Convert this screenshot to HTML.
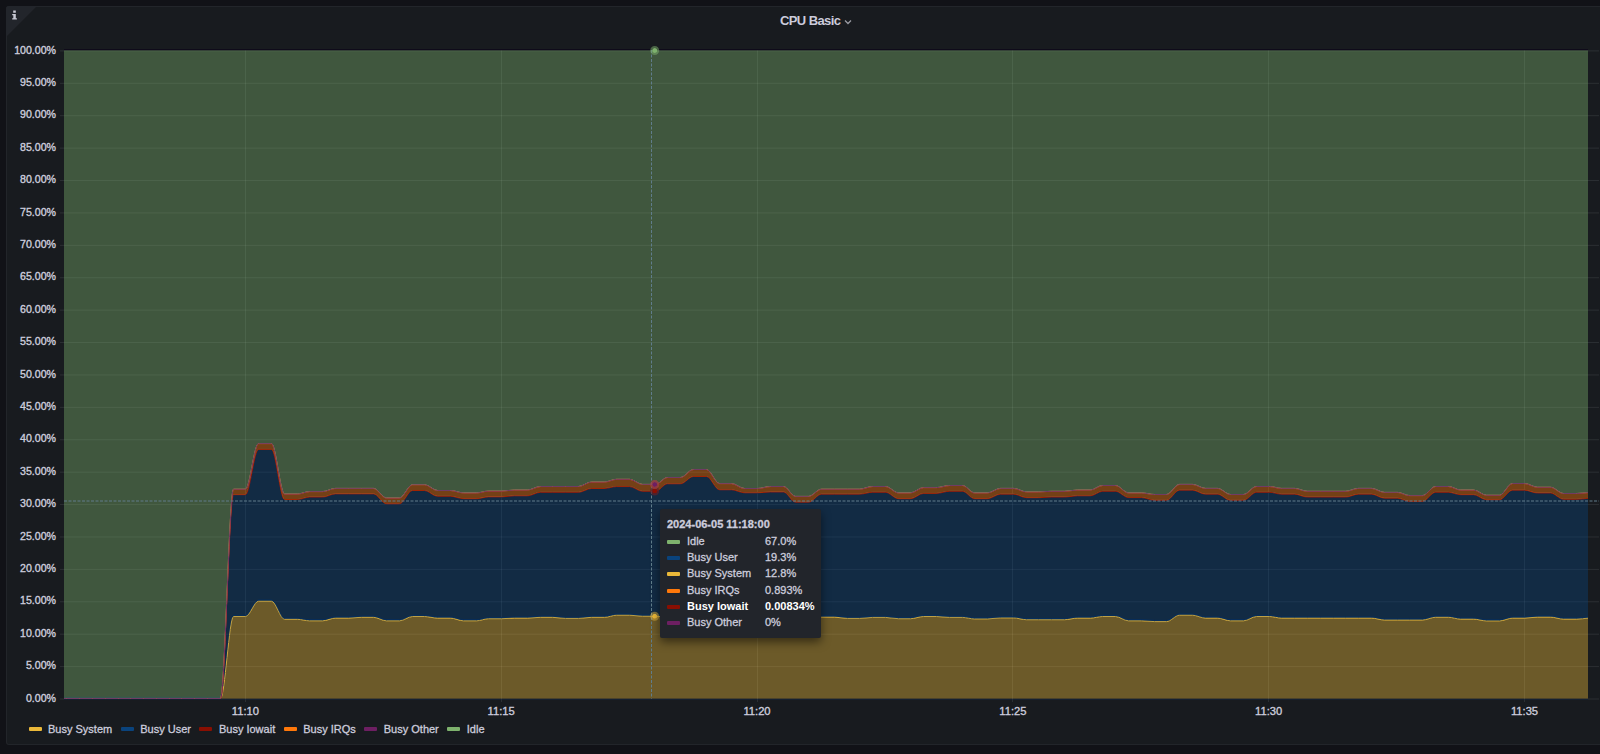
<!DOCTYPE html>
<html><head><meta charset="utf-8"><style>
html,body{margin:0;padding:0;width:1600px;height:754px;overflow:hidden;background:#111217;font-family:"Liberation Sans",sans-serif;}
.panel{position:absolute;left:6px;top:6px;width:1610px;height:739px;background:#181b1f;border:1px solid rgba(204,204,220,0.06);border-radius:3px;box-sizing:border-box;}
.corner{position:absolute;left:6px;top:6px;width:0;height:0;border-top:31px solid #22252b;border-right:31px solid transparent;border-top-left-radius:3px;}
.info{position:absolute;left:12px;top:10px;font-size:10px;font-weight:bold;color:#ccccdc;}
.title{position:absolute;left:0;top:13px;width:1600px;text-align:center;}
.title span{position:absolute;left:780px;top:0;font-size:13px;letter-spacing:-0.6px;font-weight:bold;color:#ccccdc;white-space:nowrap;}
svg{position:absolute;left:0;top:0;}
.grid line{stroke:rgba(240,250,255,0.09);stroke-width:1;}
.ln{fill:none;stroke-width:1;stroke-linejoin:round;}
.yl text{font-size:10.6px;fill:#ccccdc;text-anchor:end;stroke:#ccccdc;stroke-width:0.35px;}
.xl text{font-size:11.2px;fill:#ccccdc;text-anchor:middle;stroke:#ccccdc;stroke-width:0.35px;}
.legend{position:absolute;left:28px;top:722.5px;font-size:11px;color:#ccccdc;white-space:nowrap;-webkit-text-stroke:0.3px #ccccdc;}
.li{display:inline-block;margin-right:8px;}
.li i{display:inline-block;width:13px;height:4px;border-radius:1px;margin-right:7px;vertical-align:2px;position:relative;left:0.5px;}
.tip{position:absolute;left:660px;top:509px;width:161px;height:129px;background:#22252b;border-radius:2px;box-shadow:0 4px 10px rgba(0,0,0,0.5);box-sizing:border-box;padding:9px 7px;font-size:11px;color:#ccccdc;-webkit-text-stroke:0.3px currentColor;}
.tip .th{font-weight:bold;height:15px;}
.tr{position:relative;height:16.2px;line-height:16px;}
.tr i{position:absolute;left:0;top:7px;width:13px;height:4px;border-radius:1px;}
.tl{position:absolute;left:20px;}
.tv{position:absolute;left:98px;}
.tr.b{font-weight:bold;color:#fff;-webkit-text-stroke:0;}
</style></head><body>
<div class="panel"></div>
<div class="corner"></div>

<div class="title"><span>CPU Basic</span></div>
<svg width="1600" height="754" viewBox="0 0 1600 754">
<g class="grid"><line x1="60" x2="1599" y1="699.00" y2="699.00"/><line x1="60" x2="1599" y1="666.60" y2="666.60"/><line x1="60" x2="1599" y1="634.19" y2="634.19"/><line x1="60" x2="1599" y1="601.78" y2="601.78"/><line x1="60" x2="1599" y1="569.38" y2="569.38"/><line x1="60" x2="1599" y1="536.98" y2="536.98"/><line x1="60" x2="1599" y1="504.57" y2="504.57"/><line x1="60" x2="1599" y1="472.16" y2="472.16"/><line x1="60" x2="1599" y1="439.76" y2="439.76"/><line x1="60" x2="1599" y1="407.36" y2="407.36"/><line x1="60" x2="1599" y1="374.95" y2="374.95"/><line x1="60" x2="1599" y1="342.54" y2="342.54"/><line x1="60" x2="1599" y1="310.14" y2="310.14"/><line x1="60" x2="1599" y1="277.74" y2="277.74"/><line x1="60" x2="1599" y1="245.33" y2="245.33"/><line x1="60" x2="1599" y1="212.92" y2="212.92"/><line x1="60" x2="1599" y1="180.52" y2="180.52"/><line x1="60" x2="1599" y1="148.12" y2="148.12"/><line x1="60" x2="1599" y1="115.71" y2="115.71"/><line x1="60" x2="1599" y1="83.30" y2="83.30"/><line x1="60" x2="1599" y1="50.90" y2="50.90"/><line x1="245.50" x2="245.50" y1="50.5" y2="702"/><line x1="501.50" x2="501.50" y1="50.5" y2="702"/><line x1="757.50" x2="757.50" y1="50.5" y2="702"/><line x1="1012.50" x2="1012.50" y1="50.5" y2="702"/><line x1="1268.50" x2="1268.50" y1="50.5" y2="702"/><line x1="1524.50" x2="1524.50" y1="50.5" y2="702"/></g>
<defs><clipPath id="pc"><rect x="64" y="50" width="1524" height="649"/></clipPath></defs>
<g class="fills" clip-path="url(#pc)"><path fill="rgba(234,184,57,0.4)" d="M54.50,698.50L66.50,698.50L79.50,698.50L92.50,698.50L105.50,698.50L118.50,698.50L130.50,698.50L143.50,698.50L156.50,698.50L169.50,698.50L181.50,698.50L194.50,698.50L207.50,698.50L220.50,698.50C224.83,698.50 229.17,616.50 233.50,616.50L245.50,616.50C249.83,616.50 254.17,601.20 258.50,601.20L271.50,601.20C275.83,601.20 280.17,619.30 284.50,619.30L297.50,619.30C301.50,619.30 305.50,620.80 309.50,620.80L322.50,620.80C326.83,620.80 331.17,618.10 335.50,618.10L348.50,618.10C352.83,618.10 357.17,617.30 361.50,617.30L373.50,617.30C377.83,617.30 382.17,620.80 386.50,620.80L399.50,620.80C403.83,620.80 408.17,616.50 412.50,616.50L424.50,616.50C428.83,616.50 433.17,618.10 437.50,618.10L450.50,618.10C454.83,618.10 459.17,620.80 463.50,620.80L476.50,620.80C480.50,620.80 484.50,618.70 488.50,618.70L501.50,618.70C505.83,618.70 510.17,618.10 514.50,618.10L527.50,618.10C531.83,618.10 536.17,617.30 540.50,617.30L552.50,617.30C556.83,617.30 561.17,618.40 565.50,618.40L578.50,618.40C582.83,618.40 587.17,617.30 591.50,617.30L604.50,617.30C608.50,617.30 612.50,615.20 616.50,615.20L629.50,615.20C633.83,615.20 638.17,616.20 642.50,616.20L655.50,616.20C659.50,616.20 663.50,617.00 667.50,617.00L680.50,617.00L693.50,617.00L706.50,617.00L719.50,617.00L731.50,617.00L744.50,617.00L757.50,617.00L770.50,617.00L783.50,617.00L795.50,617.00L808.50,617.00C812.83,617.00 817.17,617.10 821.50,617.10L834.50,617.10C838.83,617.10 843.17,618.40 847.50,618.40L859.50,618.40C863.83,618.40 868.17,617.40 872.50,617.40L885.50,617.40C889.83,617.40 894.17,618.70 898.50,618.70L910.50,618.70C914.83,618.70 919.17,616.50 923.50,616.50L936.50,616.50C940.83,616.50 945.17,617.40 949.50,617.40L962.50,617.40C966.50,617.40 970.50,618.90 974.50,618.90L987.50,618.90C991.83,618.90 996.17,617.90 1000.50,617.90L1013.50,617.90C1017.83,617.90 1022.17,619.70 1026.50,619.70L1038.50,619.70L1051.50,619.70L1064.50,619.70C1068.83,619.70 1073.17,618.10 1077.50,618.10L1090.50,618.10C1094.50,618.10 1098.50,616.50 1102.50,616.50L1115.50,616.50C1119.83,616.50 1124.17,620.80 1128.50,620.80L1141.50,620.80C1145.83,620.80 1150.17,621.60 1154.50,621.60L1166.50,621.60C1170.83,621.60 1175.17,615.20 1179.50,615.20L1192.50,615.20C1196.83,615.20 1201.17,618.10 1205.50,618.10L1217.50,618.10C1221.83,618.10 1226.17,620.80 1230.50,620.80L1243.50,620.80C1247.83,620.80 1252.17,616.50 1256.50,616.50L1269.50,616.50C1273.50,616.50 1277.50,618.10 1281.50,618.10L1294.50,618.10L1307.50,618.10L1320.50,618.10L1333.50,618.10L1345.50,618.10L1358.50,618.10L1371.50,618.10C1375.83,618.10 1380.17,620.00 1384.50,620.00L1397.50,620.00L1409.50,620.00L1422.50,620.00C1426.83,620.00 1431.17,617.25 1435.50,617.25L1448.50,617.25C1452.50,617.25 1456.50,619.10 1460.50,619.10L1473.50,619.10C1477.83,619.10 1482.17,620.90 1486.50,620.90L1499.50,620.90C1503.83,620.90 1508.17,618.10 1512.50,618.10L1524.50,618.10C1528.83,618.10 1533.17,617.10 1537.50,617.10L1550.50,617.10C1554.83,617.10 1559.17,619.10 1563.50,619.10L1576.50,619.10C1580.50,619.10 1584.50,618.43 1588.50,618.10L1588.50,698.50L54.50,698.50Z"/><path class="ln" stroke="#00214f" stroke-opacity="0.85" transform="translate(0,-1.2)" d="M54.50,698.50L66.50,698.50L79.50,698.50L92.50,698.50L105.50,698.50L118.50,698.50L130.50,698.50L143.50,698.50L156.50,698.50L169.50,698.50L181.50,698.50L194.50,698.50L207.50,698.50L220.50,698.50C224.83,698.50 229.17,616.50 233.50,616.50L245.50,616.50C249.83,616.50 254.17,601.20 258.50,601.20L271.50,601.20C275.83,601.20 280.17,619.30 284.50,619.30L297.50,619.30C301.50,619.30 305.50,620.80 309.50,620.80L322.50,620.80C326.83,620.80 331.17,618.10 335.50,618.10L348.50,618.10C352.83,618.10 357.17,617.30 361.50,617.30L373.50,617.30C377.83,617.30 382.17,620.80 386.50,620.80L399.50,620.80C403.83,620.80 408.17,616.50 412.50,616.50L424.50,616.50C428.83,616.50 433.17,618.10 437.50,618.10L450.50,618.10C454.83,618.10 459.17,620.80 463.50,620.80L476.50,620.80C480.50,620.80 484.50,618.70 488.50,618.70L501.50,618.70C505.83,618.70 510.17,618.10 514.50,618.10L527.50,618.10C531.83,618.10 536.17,617.30 540.50,617.30L552.50,617.30C556.83,617.30 561.17,618.40 565.50,618.40L578.50,618.40C582.83,618.40 587.17,617.30 591.50,617.30L604.50,617.30C608.50,617.30 612.50,615.20 616.50,615.20L629.50,615.20C633.83,615.20 638.17,616.20 642.50,616.20L655.50,616.20C659.50,616.20 663.50,617.00 667.50,617.00L680.50,617.00L693.50,617.00L706.50,617.00L719.50,617.00L731.50,617.00L744.50,617.00L757.50,617.00L770.50,617.00L783.50,617.00L795.50,617.00L808.50,617.00C812.83,617.00 817.17,617.10 821.50,617.10L834.50,617.10C838.83,617.10 843.17,618.40 847.50,618.40L859.50,618.40C863.83,618.40 868.17,617.40 872.50,617.40L885.50,617.40C889.83,617.40 894.17,618.70 898.50,618.70L910.50,618.70C914.83,618.70 919.17,616.50 923.50,616.50L936.50,616.50C940.83,616.50 945.17,617.40 949.50,617.40L962.50,617.40C966.50,617.40 970.50,618.90 974.50,618.90L987.50,618.90C991.83,618.90 996.17,617.90 1000.50,617.90L1013.50,617.90C1017.83,617.90 1022.17,619.70 1026.50,619.70L1038.50,619.70L1051.50,619.70L1064.50,619.70C1068.83,619.70 1073.17,618.10 1077.50,618.10L1090.50,618.10C1094.50,618.10 1098.50,616.50 1102.50,616.50L1115.50,616.50C1119.83,616.50 1124.17,620.80 1128.50,620.80L1141.50,620.80C1145.83,620.80 1150.17,621.60 1154.50,621.60L1166.50,621.60C1170.83,621.60 1175.17,615.20 1179.50,615.20L1192.50,615.20C1196.83,615.20 1201.17,618.10 1205.50,618.10L1217.50,618.10C1221.83,618.10 1226.17,620.80 1230.50,620.80L1243.50,620.80C1247.83,620.80 1252.17,616.50 1256.50,616.50L1269.50,616.50C1273.50,616.50 1277.50,618.10 1281.50,618.10L1294.50,618.10L1307.50,618.10L1320.50,618.10L1333.50,618.10L1345.50,618.10L1358.50,618.10L1371.50,618.10C1375.83,618.10 1380.17,620.00 1384.50,620.00L1397.50,620.00L1409.50,620.00L1422.50,620.00C1426.83,620.00 1431.17,617.25 1435.50,617.25L1448.50,617.25C1452.50,617.25 1456.50,619.10 1460.50,619.10L1473.50,619.10C1477.83,619.10 1482.17,620.90 1486.50,620.90L1499.50,620.90C1503.83,620.90 1508.17,618.10 1512.50,618.10L1524.50,618.10C1528.83,618.10 1533.17,617.10 1537.50,617.10L1550.50,617.10C1554.83,617.10 1559.17,619.10 1563.50,619.10L1576.50,619.10C1580.50,619.10 1584.50,618.43 1588.50,618.10"/><path class="ln" stroke="#EAB839" d="M54.50,698.50L66.50,698.50L79.50,698.50L92.50,698.50L105.50,698.50L118.50,698.50L130.50,698.50L143.50,698.50L156.50,698.50L169.50,698.50L181.50,698.50L194.50,698.50L207.50,698.50L220.50,698.50C224.83,698.50 229.17,616.50 233.50,616.50L245.50,616.50C249.83,616.50 254.17,601.20 258.50,601.20L271.50,601.20C275.83,601.20 280.17,619.30 284.50,619.30L297.50,619.30C301.50,619.30 305.50,620.80 309.50,620.80L322.50,620.80C326.83,620.80 331.17,618.10 335.50,618.10L348.50,618.10C352.83,618.10 357.17,617.30 361.50,617.30L373.50,617.30C377.83,617.30 382.17,620.80 386.50,620.80L399.50,620.80C403.83,620.80 408.17,616.50 412.50,616.50L424.50,616.50C428.83,616.50 433.17,618.10 437.50,618.10L450.50,618.10C454.83,618.10 459.17,620.80 463.50,620.80L476.50,620.80C480.50,620.80 484.50,618.70 488.50,618.70L501.50,618.70C505.83,618.70 510.17,618.10 514.50,618.10L527.50,618.10C531.83,618.10 536.17,617.30 540.50,617.30L552.50,617.30C556.83,617.30 561.17,618.40 565.50,618.40L578.50,618.40C582.83,618.40 587.17,617.30 591.50,617.30L604.50,617.30C608.50,617.30 612.50,615.20 616.50,615.20L629.50,615.20C633.83,615.20 638.17,616.20 642.50,616.20L655.50,616.20C659.50,616.20 663.50,617.00 667.50,617.00L680.50,617.00L693.50,617.00L706.50,617.00L719.50,617.00L731.50,617.00L744.50,617.00L757.50,617.00L770.50,617.00L783.50,617.00L795.50,617.00L808.50,617.00C812.83,617.00 817.17,617.10 821.50,617.10L834.50,617.10C838.83,617.10 843.17,618.40 847.50,618.40L859.50,618.40C863.83,618.40 868.17,617.40 872.50,617.40L885.50,617.40C889.83,617.40 894.17,618.70 898.50,618.70L910.50,618.70C914.83,618.70 919.17,616.50 923.50,616.50L936.50,616.50C940.83,616.50 945.17,617.40 949.50,617.40L962.50,617.40C966.50,617.40 970.50,618.90 974.50,618.90L987.50,618.90C991.83,618.90 996.17,617.90 1000.50,617.90L1013.50,617.90C1017.83,617.90 1022.17,619.70 1026.50,619.70L1038.50,619.70L1051.50,619.70L1064.50,619.70C1068.83,619.70 1073.17,618.10 1077.50,618.10L1090.50,618.10C1094.50,618.10 1098.50,616.50 1102.50,616.50L1115.50,616.50C1119.83,616.50 1124.17,620.80 1128.50,620.80L1141.50,620.80C1145.83,620.80 1150.17,621.60 1154.50,621.60L1166.50,621.60C1170.83,621.60 1175.17,615.20 1179.50,615.20L1192.50,615.20C1196.83,615.20 1201.17,618.10 1205.50,618.10L1217.50,618.10C1221.83,618.10 1226.17,620.80 1230.50,620.80L1243.50,620.80C1247.83,620.80 1252.17,616.50 1256.50,616.50L1269.50,616.50C1273.50,616.50 1277.50,618.10 1281.50,618.10L1294.50,618.10L1307.50,618.10L1320.50,618.10L1333.50,618.10L1345.50,618.10L1358.50,618.10L1371.50,618.10C1375.83,618.10 1380.17,620.00 1384.50,620.00L1397.50,620.00L1409.50,620.00L1422.50,620.00C1426.83,620.00 1431.17,617.25 1435.50,617.25L1448.50,617.25C1452.50,617.25 1456.50,619.10 1460.50,619.10L1473.50,619.10C1477.83,619.10 1482.17,620.90 1486.50,620.90L1499.50,620.90C1503.83,620.90 1508.17,618.10 1512.50,618.10L1524.50,618.10C1528.83,618.10 1533.17,617.10 1537.50,617.10L1550.50,617.10C1554.83,617.10 1559.17,619.10 1563.50,619.10L1576.50,619.10C1580.50,619.10 1584.50,618.43 1588.50,618.10"/><path fill="rgba(10,67,124,0.4)" d="M54.50,698.50L66.50,698.50L79.50,698.50L92.50,698.50L105.50,698.50L118.50,698.50L130.50,698.50L143.50,698.50L156.50,698.50L169.50,698.50L181.50,698.50L194.50,698.50L207.50,698.50L220.50,698.50C224.83,698.50 229.17,494.70 233.50,494.70L245.50,494.70C249.83,494.70 254.17,449.40 258.50,449.40L271.50,449.40C275.83,449.40 280.17,499.50 284.50,499.50L297.50,499.50C301.50,499.50 305.50,497.10 309.50,497.10L322.50,497.10C326.83,497.10 331.17,493.90 335.50,493.90L348.50,493.90L361.50,493.90L373.50,493.90C377.83,493.90 382.17,503.80 386.50,503.80L399.50,503.80C403.83,503.80 408.17,490.50 412.50,490.50L424.50,490.50C428.83,490.50 433.17,496.30 437.50,496.30L450.50,496.30C454.83,496.30 459.17,498.70 463.50,498.70L476.50,498.70C480.50,498.70 484.50,496.90 488.50,496.90L501.50,496.90C505.83,496.90 510.17,495.80 514.50,495.80L527.50,495.80C531.83,495.80 536.17,492.30 540.50,492.30L552.50,492.30L565.50,492.30L578.50,492.30C582.83,492.30 587.17,488.50 591.50,488.50L604.50,488.50C608.50,488.50 612.50,486.60 616.50,486.60L629.50,486.60C633.83,486.60 638.17,491.30 642.50,491.30L655.50,491.30C659.50,491.30 663.50,483.80 667.50,483.80L680.50,483.80C684.83,483.80 689.17,476.50 693.50,476.50L706.50,476.50C710.83,476.50 715.17,489.80 719.50,489.80L731.50,489.80C735.83,489.80 740.17,492.80 744.50,492.80L757.50,492.80C761.83,492.80 766.17,492.00 770.50,492.00L783.50,492.00C787.50,492.00 791.50,502.20 795.50,502.20L808.50,502.20C812.83,502.20 817.17,494.20 821.50,494.20L834.50,494.20L847.50,494.20L859.50,494.20C863.83,494.20 868.17,492.30 872.50,492.30L885.50,492.30C889.83,492.30 894.17,498.70 898.50,498.70L910.50,498.70C914.83,498.70 919.17,493.40 923.50,493.40L936.50,493.40C940.83,493.40 945.17,491.30 949.50,491.30L962.50,491.30C966.50,491.30 970.50,498.70 974.50,498.70L987.50,498.70C991.83,498.70 996.17,494.20 1000.50,494.20L1013.50,494.20C1017.83,494.20 1022.17,497.70 1026.50,497.70L1038.50,497.70C1042.83,497.70 1047.17,497.10 1051.50,497.10L1064.50,497.10C1068.83,497.10 1073.17,495.80 1077.50,495.80L1090.50,495.80C1094.50,495.80 1098.50,491.30 1102.50,491.30L1115.50,491.30C1119.83,491.30 1124.17,497.60 1128.50,497.60L1141.50,497.60C1145.83,497.60 1150.17,500.30 1154.50,500.30L1166.50,500.30C1170.83,500.30 1175.17,490.20 1179.50,490.20L1192.50,490.20C1196.83,490.20 1201.17,494.20 1205.50,494.20L1217.50,494.20C1221.83,494.20 1226.17,500.30 1230.50,500.30L1243.50,500.30C1247.83,500.30 1252.17,492.30 1256.50,492.30L1269.50,492.30C1273.50,492.30 1277.50,494.20 1281.50,494.20L1294.50,494.20C1298.83,494.20 1303.17,497.10 1307.50,497.10L1320.50,497.10L1333.50,497.10L1345.50,497.10C1349.83,497.10 1354.17,494.20 1358.50,494.20L1371.50,494.20C1375.83,494.20 1380.17,498.20 1384.50,498.20L1397.50,498.20C1401.50,498.20 1405.50,501.40 1409.50,501.40L1422.50,501.40C1426.83,501.40 1431.17,492.30 1435.50,492.30L1448.50,492.30C1452.50,492.30 1456.50,494.70 1460.50,494.70L1473.50,494.70C1477.83,494.70 1482.17,499.75 1486.50,499.75L1499.50,499.75C1503.83,499.75 1508.17,490.20 1512.50,490.20L1524.50,490.20C1528.83,490.20 1533.17,493.05 1537.50,493.05L1550.50,493.05C1554.83,493.05 1559.17,499.30 1563.50,499.30L1576.50,499.30C1580.50,499.30 1584.50,498.63 1588.50,498.30L1588.50,618.10C1584.50,618.43 1580.50,619.10 1576.50,619.10L1563.50,619.10C1559.17,619.10 1554.83,617.10 1550.50,617.10L1537.50,617.10C1533.17,617.10 1528.83,618.10 1524.50,618.10L1512.50,618.10C1508.17,618.10 1503.83,620.90 1499.50,620.90L1486.50,620.90C1482.17,620.90 1477.83,619.10 1473.50,619.10L1460.50,619.10C1456.50,619.10 1452.50,617.25 1448.50,617.25L1435.50,617.25C1431.17,617.25 1426.83,620.00 1422.50,620.00L1409.50,620.00L1397.50,620.00L1384.50,620.00C1380.17,620.00 1375.83,618.10 1371.50,618.10L1358.50,618.10L1345.50,618.10L1333.50,618.10L1320.50,618.10L1307.50,618.10L1294.50,618.10L1281.50,618.10C1277.50,618.10 1273.50,616.50 1269.50,616.50L1256.50,616.50C1252.17,616.50 1247.83,620.80 1243.50,620.80L1230.50,620.80C1226.17,620.80 1221.83,618.10 1217.50,618.10L1205.50,618.10C1201.17,618.10 1196.83,615.20 1192.50,615.20L1179.50,615.20C1175.17,615.20 1170.83,621.60 1166.50,621.60L1154.50,621.60C1150.17,621.60 1145.83,620.80 1141.50,620.80L1128.50,620.80C1124.17,620.80 1119.83,616.50 1115.50,616.50L1102.50,616.50C1098.50,616.50 1094.50,618.10 1090.50,618.10L1077.50,618.10C1073.17,618.10 1068.83,619.70 1064.50,619.70L1051.50,619.70L1038.50,619.70L1026.50,619.70C1022.17,619.70 1017.83,617.90 1013.50,617.90L1000.50,617.90C996.17,617.90 991.83,618.90 987.50,618.90L974.50,618.90C970.50,618.90 966.50,617.40 962.50,617.40L949.50,617.40C945.17,617.40 940.83,616.50 936.50,616.50L923.50,616.50C919.17,616.50 914.83,618.70 910.50,618.70L898.50,618.70C894.17,618.70 889.83,617.40 885.50,617.40L872.50,617.40C868.17,617.40 863.83,618.40 859.50,618.40L847.50,618.40C843.17,618.40 838.83,617.10 834.50,617.10L821.50,617.10C817.17,617.10 812.83,617.00 808.50,617.00L795.50,617.00L783.50,617.00L770.50,617.00L757.50,617.00L744.50,617.00L731.50,617.00L719.50,617.00L706.50,617.00L693.50,617.00L680.50,617.00L667.50,617.00C663.50,617.00 659.50,616.20 655.50,616.20L642.50,616.20C638.17,616.20 633.83,615.20 629.50,615.20L616.50,615.20C612.50,615.20 608.50,617.30 604.50,617.30L591.50,617.30C587.17,617.30 582.83,618.40 578.50,618.40L565.50,618.40C561.17,618.40 556.83,617.30 552.50,617.30L540.50,617.30C536.17,617.30 531.83,618.10 527.50,618.10L514.50,618.10C510.17,618.10 505.83,618.70 501.50,618.70L488.50,618.70C484.50,618.70 480.50,620.80 476.50,620.80L463.50,620.80C459.17,620.80 454.83,618.10 450.50,618.10L437.50,618.10C433.17,618.10 428.83,616.50 424.50,616.50L412.50,616.50C408.17,616.50 403.83,620.80 399.50,620.80L386.50,620.80C382.17,620.80 377.83,617.30 373.50,617.30L361.50,617.30C357.17,617.30 352.83,618.10 348.50,618.10L335.50,618.10C331.17,618.10 326.83,620.80 322.50,620.80L309.50,620.80C305.50,620.80 301.50,619.30 297.50,619.30L284.50,619.30C280.17,619.30 275.83,601.20 271.50,601.20L258.50,601.20C254.17,601.20 249.83,616.50 245.50,616.50L233.50,616.50C229.17,616.50 224.83,698.50 220.50,698.50L207.50,698.50L194.50,698.50L181.50,698.50L169.50,698.50L156.50,698.50L143.50,698.50L130.50,698.50L118.50,698.50L105.50,698.50L92.50,698.50L79.50,698.50L66.50,698.50L54.50,698.50Z"/><path class="ln" stroke="#0A437C" d="M54.50,698.50L66.50,698.50L79.50,698.50L92.50,698.50L105.50,698.50L118.50,698.50L130.50,698.50L143.50,698.50L156.50,698.50L169.50,698.50L181.50,698.50L194.50,698.50L207.50,698.50L220.50,698.50C224.83,698.50 229.17,494.70 233.50,494.70L245.50,494.70C249.83,494.70 254.17,449.40 258.50,449.40L271.50,449.40C275.83,449.40 280.17,499.50 284.50,499.50L297.50,499.50C301.50,499.50 305.50,497.10 309.50,497.10L322.50,497.10C326.83,497.10 331.17,493.90 335.50,493.90L348.50,493.90L361.50,493.90L373.50,493.90C377.83,493.90 382.17,503.80 386.50,503.80L399.50,503.80C403.83,503.80 408.17,490.50 412.50,490.50L424.50,490.50C428.83,490.50 433.17,496.30 437.50,496.30L450.50,496.30C454.83,496.30 459.17,498.70 463.50,498.70L476.50,498.70C480.50,498.70 484.50,496.90 488.50,496.90L501.50,496.90C505.83,496.90 510.17,495.80 514.50,495.80L527.50,495.80C531.83,495.80 536.17,492.30 540.50,492.30L552.50,492.30L565.50,492.30L578.50,492.30C582.83,492.30 587.17,488.50 591.50,488.50L604.50,488.50C608.50,488.50 612.50,486.60 616.50,486.60L629.50,486.60C633.83,486.60 638.17,491.30 642.50,491.30L655.50,491.30C659.50,491.30 663.50,483.80 667.50,483.80L680.50,483.80C684.83,483.80 689.17,476.50 693.50,476.50L706.50,476.50C710.83,476.50 715.17,489.80 719.50,489.80L731.50,489.80C735.83,489.80 740.17,492.80 744.50,492.80L757.50,492.80C761.83,492.80 766.17,492.00 770.50,492.00L783.50,492.00C787.50,492.00 791.50,502.20 795.50,502.20L808.50,502.20C812.83,502.20 817.17,494.20 821.50,494.20L834.50,494.20L847.50,494.20L859.50,494.20C863.83,494.20 868.17,492.30 872.50,492.30L885.50,492.30C889.83,492.30 894.17,498.70 898.50,498.70L910.50,498.70C914.83,498.70 919.17,493.40 923.50,493.40L936.50,493.40C940.83,493.40 945.17,491.30 949.50,491.30L962.50,491.30C966.50,491.30 970.50,498.70 974.50,498.70L987.50,498.70C991.83,498.70 996.17,494.20 1000.50,494.20L1013.50,494.20C1017.83,494.20 1022.17,497.70 1026.50,497.70L1038.50,497.70C1042.83,497.70 1047.17,497.10 1051.50,497.10L1064.50,497.10C1068.83,497.10 1073.17,495.80 1077.50,495.80L1090.50,495.80C1094.50,495.80 1098.50,491.30 1102.50,491.30L1115.50,491.30C1119.83,491.30 1124.17,497.60 1128.50,497.60L1141.50,497.60C1145.83,497.60 1150.17,500.30 1154.50,500.30L1166.50,500.30C1170.83,500.30 1175.17,490.20 1179.50,490.20L1192.50,490.20C1196.83,490.20 1201.17,494.20 1205.50,494.20L1217.50,494.20C1221.83,494.20 1226.17,500.30 1230.50,500.30L1243.50,500.30C1247.83,500.30 1252.17,492.30 1256.50,492.30L1269.50,492.30C1273.50,492.30 1277.50,494.20 1281.50,494.20L1294.50,494.20C1298.83,494.20 1303.17,497.10 1307.50,497.10L1320.50,497.10L1333.50,497.10L1345.50,497.10C1349.83,497.10 1354.17,494.20 1358.50,494.20L1371.50,494.20C1375.83,494.20 1380.17,498.20 1384.50,498.20L1397.50,498.20C1401.50,498.20 1405.50,501.40 1409.50,501.40L1422.50,501.40C1426.83,501.40 1431.17,492.30 1435.50,492.30L1448.50,492.30C1452.50,492.30 1456.50,494.70 1460.50,494.70L1473.50,494.70C1477.83,494.70 1482.17,499.75 1486.50,499.75L1499.50,499.75C1503.83,499.75 1508.17,490.20 1512.50,490.20L1524.50,490.20C1528.83,490.20 1533.17,493.05 1537.50,493.05L1550.50,493.05C1554.83,493.05 1559.17,499.30 1563.50,499.30L1576.50,499.30C1580.50,499.30 1584.50,498.63 1588.50,498.30"/><path class="ln" stroke="#890F02" d="M54.50,698.50L66.50,698.50L79.50,698.50L92.50,698.50L105.50,698.50L118.50,698.50L130.50,698.50L143.50,698.50L156.50,698.50L169.50,698.50L181.50,698.50L194.50,698.50L207.50,698.50L220.50,698.50C224.83,698.50 229.17,494.70 233.50,494.70L245.50,494.70C249.83,494.70 254.17,449.40 258.50,449.40L271.50,449.40C275.83,449.40 280.17,499.50 284.50,499.50L297.50,499.50C301.50,499.50 305.50,497.10 309.50,497.10L322.50,497.10C326.83,497.10 331.17,493.90 335.50,493.90L348.50,493.90L361.50,493.90L373.50,493.90C377.83,493.90 382.17,503.80 386.50,503.80L399.50,503.80C403.83,503.80 408.17,490.50 412.50,490.50L424.50,490.50C428.83,490.50 433.17,496.30 437.50,496.30L450.50,496.30C454.83,496.30 459.17,498.70 463.50,498.70L476.50,498.70C480.50,498.70 484.50,496.90 488.50,496.90L501.50,496.90C505.83,496.90 510.17,495.80 514.50,495.80L527.50,495.80C531.83,495.80 536.17,492.30 540.50,492.30L552.50,492.30L565.50,492.30L578.50,492.30C582.83,492.30 587.17,488.50 591.50,488.50L604.50,488.50C608.50,488.50 612.50,486.60 616.50,486.60L629.50,486.60C633.83,486.60 638.17,491.30 642.50,491.30L655.50,491.30C659.50,491.30 663.50,483.80 667.50,483.80L680.50,483.80C684.83,483.80 689.17,476.50 693.50,476.50L706.50,476.50C710.83,476.50 715.17,489.80 719.50,489.80L731.50,489.80C735.83,489.80 740.17,492.80 744.50,492.80L757.50,492.80C761.83,492.80 766.17,492.00 770.50,492.00L783.50,492.00C787.50,492.00 791.50,502.20 795.50,502.20L808.50,502.20C812.83,502.20 817.17,494.20 821.50,494.20L834.50,494.20L847.50,494.20L859.50,494.20C863.83,494.20 868.17,492.30 872.50,492.30L885.50,492.30C889.83,492.30 894.17,498.70 898.50,498.70L910.50,498.70C914.83,498.70 919.17,493.40 923.50,493.40L936.50,493.40C940.83,493.40 945.17,491.30 949.50,491.30L962.50,491.30C966.50,491.30 970.50,498.70 974.50,498.70L987.50,498.70C991.83,498.70 996.17,494.20 1000.50,494.20L1013.50,494.20C1017.83,494.20 1022.17,497.70 1026.50,497.70L1038.50,497.70C1042.83,497.70 1047.17,497.10 1051.50,497.10L1064.50,497.10C1068.83,497.10 1073.17,495.80 1077.50,495.80L1090.50,495.80C1094.50,495.80 1098.50,491.30 1102.50,491.30L1115.50,491.30C1119.83,491.30 1124.17,497.60 1128.50,497.60L1141.50,497.60C1145.83,497.60 1150.17,500.30 1154.50,500.30L1166.50,500.30C1170.83,500.30 1175.17,490.20 1179.50,490.20L1192.50,490.20C1196.83,490.20 1201.17,494.20 1205.50,494.20L1217.50,494.20C1221.83,494.20 1226.17,500.30 1230.50,500.30L1243.50,500.30C1247.83,500.30 1252.17,492.30 1256.50,492.30L1269.50,492.30C1273.50,492.30 1277.50,494.20 1281.50,494.20L1294.50,494.20C1298.83,494.20 1303.17,497.10 1307.50,497.10L1320.50,497.10L1333.50,497.10L1345.50,497.10C1349.83,497.10 1354.17,494.20 1358.50,494.20L1371.50,494.20C1375.83,494.20 1380.17,498.20 1384.50,498.20L1397.50,498.20C1401.50,498.20 1405.50,501.40 1409.50,501.40L1422.50,501.40C1426.83,501.40 1431.17,492.30 1435.50,492.30L1448.50,492.30C1452.50,492.30 1456.50,494.70 1460.50,494.70L1473.50,494.70C1477.83,494.70 1482.17,499.75 1486.50,499.75L1499.50,499.75C1503.83,499.75 1508.17,490.20 1512.50,490.20L1524.50,490.20C1528.83,490.20 1533.17,493.05 1537.50,493.05L1550.50,493.05C1554.83,493.05 1559.17,499.30 1563.50,499.30L1576.50,499.30C1580.50,499.30 1584.50,498.63 1588.50,498.30"/><path fill="rgba(255,120,10,0.4)" d="M54.50,698.50L66.50,698.50L79.50,698.50L92.50,698.50L105.50,698.50L118.50,698.50L130.50,698.50L143.50,698.50L156.50,698.50L169.50,698.50L181.50,698.50L194.50,698.50L207.50,698.50L220.50,698.50C224.83,698.50 229.17,489.20 233.50,489.20L245.50,489.20C249.83,489.20 254.17,443.60 258.50,443.60L271.50,443.60C275.83,443.60 280.17,494.00 284.50,494.00L297.50,494.00C301.50,494.00 305.50,491.60 309.50,491.60L322.50,491.60C326.83,491.60 331.17,488.40 335.50,488.40L348.50,488.40L361.50,488.40L373.50,488.40C377.83,488.40 382.17,498.00 386.50,498.00L399.50,498.00C403.83,498.00 408.17,484.70 412.50,484.70L424.50,484.70C428.83,484.70 433.17,490.50 437.50,490.50L450.50,490.50C454.83,490.50 459.17,492.90 463.50,492.90L476.50,492.90C480.50,492.90 484.50,491.10 488.50,491.10L501.50,491.10C505.83,491.10 510.17,490.00 514.50,490.00L527.50,490.00C531.83,490.00 536.17,486.50 540.50,486.50L552.50,486.50L565.50,486.50L578.50,486.50C582.83,486.50 587.17,482.00 591.50,482.00L604.50,482.00C608.50,482.00 612.50,479.30 616.50,479.30L629.50,479.30C633.83,479.30 638.17,484.40 642.50,484.40L655.50,484.40C659.50,484.40 663.50,477.50 667.50,477.50L680.50,477.50C684.83,477.50 689.17,469.50 693.50,469.50L706.50,469.50C710.83,469.50 715.17,483.60 719.50,483.60L731.50,483.60C735.83,483.60 740.17,488.50 744.50,488.50L757.50,488.50C761.83,488.50 766.17,486.50 770.50,486.50L783.50,486.50C787.50,486.50 791.50,496.40 795.50,496.40L808.50,496.40C812.83,496.40 817.17,489.20 821.50,489.20L834.50,489.20L847.50,489.20L859.50,489.20C863.83,489.20 868.17,486.50 872.50,486.50L885.50,486.50C889.83,486.50 894.17,492.90 898.50,492.90L910.50,492.90C914.83,492.90 919.17,487.60 923.50,487.60L936.50,487.60C940.83,487.60 945.17,485.50 949.50,485.50L962.50,485.50C966.50,485.50 970.50,492.90 974.50,492.90L987.50,492.90C991.83,492.90 996.17,488.40 1000.50,488.40L1013.50,488.40C1017.83,488.40 1022.17,491.90 1026.50,491.90L1038.50,491.90C1042.83,491.90 1047.17,491.30 1051.50,491.30L1064.50,491.30C1068.83,491.30 1073.17,490.00 1077.50,490.00L1090.50,490.00C1094.50,490.00 1098.50,485.50 1102.50,485.50L1115.50,485.50C1119.83,485.50 1124.17,492.90 1128.50,492.90L1141.50,492.90C1145.83,492.90 1150.17,494.50 1154.50,494.50L1166.50,494.50C1170.83,494.50 1175.17,484.40 1179.50,484.40L1192.50,484.40C1196.83,484.40 1201.17,488.40 1205.50,488.40L1217.50,488.40C1221.83,488.40 1226.17,494.50 1230.50,494.50L1243.50,494.50C1247.83,494.50 1252.17,486.50 1256.50,486.50L1269.50,486.50C1273.50,486.50 1277.50,488.40 1281.50,488.40L1294.50,488.40C1298.83,488.40 1303.17,491.30 1307.50,491.30L1320.50,491.30L1333.50,491.30L1345.50,491.30C1349.83,491.30 1354.17,488.40 1358.50,488.40L1371.50,488.40C1375.83,488.40 1380.17,492.40 1384.50,492.40L1397.50,492.40C1401.50,492.40 1405.50,495.60 1409.50,495.60L1422.50,495.60C1426.83,495.60 1431.17,486.50 1435.50,486.50L1448.50,486.50C1452.50,486.50 1456.50,490.00 1460.50,490.00L1473.50,490.00C1477.83,490.00 1482.17,495.25 1486.50,495.25L1499.50,495.25C1503.83,495.25 1508.17,483.50 1512.50,483.50L1524.50,483.50C1528.83,483.50 1533.17,487.25 1537.50,487.25L1550.50,487.25C1554.83,487.25 1559.17,493.50 1563.50,493.50L1576.50,493.50C1580.50,493.50 1584.50,492.83 1588.50,492.50L1588.50,498.30C1584.50,498.63 1580.50,499.30 1576.50,499.30L1563.50,499.30C1559.17,499.30 1554.83,493.05 1550.50,493.05L1537.50,493.05C1533.17,493.05 1528.83,490.20 1524.50,490.20L1512.50,490.20C1508.17,490.20 1503.83,499.75 1499.50,499.75L1486.50,499.75C1482.17,499.75 1477.83,494.70 1473.50,494.70L1460.50,494.70C1456.50,494.70 1452.50,492.30 1448.50,492.30L1435.50,492.30C1431.17,492.30 1426.83,501.40 1422.50,501.40L1409.50,501.40C1405.50,501.40 1401.50,498.20 1397.50,498.20L1384.50,498.20C1380.17,498.20 1375.83,494.20 1371.50,494.20L1358.50,494.20C1354.17,494.20 1349.83,497.10 1345.50,497.10L1333.50,497.10L1320.50,497.10L1307.50,497.10C1303.17,497.10 1298.83,494.20 1294.50,494.20L1281.50,494.20C1277.50,494.20 1273.50,492.30 1269.50,492.30L1256.50,492.30C1252.17,492.30 1247.83,500.30 1243.50,500.30L1230.50,500.30C1226.17,500.30 1221.83,494.20 1217.50,494.20L1205.50,494.20C1201.17,494.20 1196.83,490.20 1192.50,490.20L1179.50,490.20C1175.17,490.20 1170.83,500.30 1166.50,500.30L1154.50,500.30C1150.17,500.30 1145.83,497.60 1141.50,497.60L1128.50,497.60C1124.17,497.60 1119.83,491.30 1115.50,491.30L1102.50,491.30C1098.50,491.30 1094.50,495.80 1090.50,495.80L1077.50,495.80C1073.17,495.80 1068.83,497.10 1064.50,497.10L1051.50,497.10C1047.17,497.10 1042.83,497.70 1038.50,497.70L1026.50,497.70C1022.17,497.70 1017.83,494.20 1013.50,494.20L1000.50,494.20C996.17,494.20 991.83,498.70 987.50,498.70L974.50,498.70C970.50,498.70 966.50,491.30 962.50,491.30L949.50,491.30C945.17,491.30 940.83,493.40 936.50,493.40L923.50,493.40C919.17,493.40 914.83,498.70 910.50,498.70L898.50,498.70C894.17,498.70 889.83,492.30 885.50,492.30L872.50,492.30C868.17,492.30 863.83,494.20 859.50,494.20L847.50,494.20L834.50,494.20L821.50,494.20C817.17,494.20 812.83,502.20 808.50,502.20L795.50,502.20C791.50,502.20 787.50,492.00 783.50,492.00L770.50,492.00C766.17,492.00 761.83,492.80 757.50,492.80L744.50,492.80C740.17,492.80 735.83,489.80 731.50,489.80L719.50,489.80C715.17,489.80 710.83,476.50 706.50,476.50L693.50,476.50C689.17,476.50 684.83,483.80 680.50,483.80L667.50,483.80C663.50,483.80 659.50,491.30 655.50,491.30L642.50,491.30C638.17,491.30 633.83,486.60 629.50,486.60L616.50,486.60C612.50,486.60 608.50,488.50 604.50,488.50L591.50,488.50C587.17,488.50 582.83,492.30 578.50,492.30L565.50,492.30L552.50,492.30L540.50,492.30C536.17,492.30 531.83,495.80 527.50,495.80L514.50,495.80C510.17,495.80 505.83,496.90 501.50,496.90L488.50,496.90C484.50,496.90 480.50,498.70 476.50,498.70L463.50,498.70C459.17,498.70 454.83,496.30 450.50,496.30L437.50,496.30C433.17,496.30 428.83,490.50 424.50,490.50L412.50,490.50C408.17,490.50 403.83,503.80 399.50,503.80L386.50,503.80C382.17,503.80 377.83,493.90 373.50,493.90L361.50,493.90L348.50,493.90L335.50,493.90C331.17,493.90 326.83,497.10 322.50,497.10L309.50,497.10C305.50,497.10 301.50,499.50 297.50,499.50L284.50,499.50C280.17,499.50 275.83,449.40 271.50,449.40L258.50,449.40C254.17,449.40 249.83,494.70 245.50,494.70L233.50,494.70C229.17,494.70 224.83,698.50 220.50,698.50L207.50,698.50L194.50,698.50L181.50,698.50L169.50,698.50L156.50,698.50L143.50,698.50L130.50,698.50L118.50,698.50L105.50,698.50L92.50,698.50L79.50,698.50L66.50,698.50L54.50,698.50Z"/><path class="ln" stroke="#FF780A" d="M54.50,698.50L66.50,698.50L79.50,698.50L92.50,698.50L105.50,698.50L118.50,698.50L130.50,698.50L143.50,698.50L156.50,698.50L169.50,698.50L181.50,698.50L194.50,698.50L207.50,698.50L220.50,698.50C224.83,698.50 229.17,489.20 233.50,489.20L245.50,489.20C249.83,489.20 254.17,443.60 258.50,443.60L271.50,443.60C275.83,443.60 280.17,494.00 284.50,494.00L297.50,494.00C301.50,494.00 305.50,491.60 309.50,491.60L322.50,491.60C326.83,491.60 331.17,488.40 335.50,488.40L348.50,488.40L361.50,488.40L373.50,488.40C377.83,488.40 382.17,498.00 386.50,498.00L399.50,498.00C403.83,498.00 408.17,484.70 412.50,484.70L424.50,484.70C428.83,484.70 433.17,490.50 437.50,490.50L450.50,490.50C454.83,490.50 459.17,492.90 463.50,492.90L476.50,492.90C480.50,492.90 484.50,491.10 488.50,491.10L501.50,491.10C505.83,491.10 510.17,490.00 514.50,490.00L527.50,490.00C531.83,490.00 536.17,486.50 540.50,486.50L552.50,486.50L565.50,486.50L578.50,486.50C582.83,486.50 587.17,482.00 591.50,482.00L604.50,482.00C608.50,482.00 612.50,479.30 616.50,479.30L629.50,479.30C633.83,479.30 638.17,484.40 642.50,484.40L655.50,484.40C659.50,484.40 663.50,477.50 667.50,477.50L680.50,477.50C684.83,477.50 689.17,469.50 693.50,469.50L706.50,469.50C710.83,469.50 715.17,483.60 719.50,483.60L731.50,483.60C735.83,483.60 740.17,488.50 744.50,488.50L757.50,488.50C761.83,488.50 766.17,486.50 770.50,486.50L783.50,486.50C787.50,486.50 791.50,496.40 795.50,496.40L808.50,496.40C812.83,496.40 817.17,489.20 821.50,489.20L834.50,489.20L847.50,489.20L859.50,489.20C863.83,489.20 868.17,486.50 872.50,486.50L885.50,486.50C889.83,486.50 894.17,492.90 898.50,492.90L910.50,492.90C914.83,492.90 919.17,487.60 923.50,487.60L936.50,487.60C940.83,487.60 945.17,485.50 949.50,485.50L962.50,485.50C966.50,485.50 970.50,492.90 974.50,492.90L987.50,492.90C991.83,492.90 996.17,488.40 1000.50,488.40L1013.50,488.40C1017.83,488.40 1022.17,491.90 1026.50,491.90L1038.50,491.90C1042.83,491.90 1047.17,491.30 1051.50,491.30L1064.50,491.30C1068.83,491.30 1073.17,490.00 1077.50,490.00L1090.50,490.00C1094.50,490.00 1098.50,485.50 1102.50,485.50L1115.50,485.50C1119.83,485.50 1124.17,492.90 1128.50,492.90L1141.50,492.90C1145.83,492.90 1150.17,494.50 1154.50,494.50L1166.50,494.50C1170.83,494.50 1175.17,484.40 1179.50,484.40L1192.50,484.40C1196.83,484.40 1201.17,488.40 1205.50,488.40L1217.50,488.40C1221.83,488.40 1226.17,494.50 1230.50,494.50L1243.50,494.50C1247.83,494.50 1252.17,486.50 1256.50,486.50L1269.50,486.50C1273.50,486.50 1277.50,488.40 1281.50,488.40L1294.50,488.40C1298.83,488.40 1303.17,491.30 1307.50,491.30L1320.50,491.30L1333.50,491.30L1345.50,491.30C1349.83,491.30 1354.17,488.40 1358.50,488.40L1371.50,488.40C1375.83,488.40 1380.17,492.40 1384.50,492.40L1397.50,492.40C1401.50,492.40 1405.50,495.60 1409.50,495.60L1422.50,495.60C1426.83,495.60 1431.17,486.50 1435.50,486.50L1448.50,486.50C1452.50,486.50 1456.50,490.00 1460.50,490.00L1473.50,490.00C1477.83,490.00 1482.17,495.25 1486.50,495.25L1499.50,495.25C1503.83,495.25 1508.17,483.50 1512.50,483.50L1524.50,483.50C1528.83,483.50 1533.17,487.25 1537.50,487.25L1550.50,487.25C1554.83,487.25 1559.17,493.50 1563.50,493.50L1576.50,493.50C1580.50,493.50 1584.50,492.83 1588.50,492.50"/><path class="ln" stroke="#6D1F62" d="M54.50,698.50L66.50,698.50L79.50,698.50L92.50,698.50L105.50,698.50L118.50,698.50L130.50,698.50L143.50,698.50L156.50,698.50L169.50,698.50L181.50,698.50L194.50,698.50L207.50,698.50L220.50,698.50C224.83,698.50 229.17,489.20 233.50,489.20L245.50,489.20C249.83,489.20 254.17,443.60 258.50,443.60L271.50,443.60C275.83,443.60 280.17,494.00 284.50,494.00L297.50,494.00C301.50,494.00 305.50,491.60 309.50,491.60L322.50,491.60C326.83,491.60 331.17,488.40 335.50,488.40L348.50,488.40L361.50,488.40L373.50,488.40C377.83,488.40 382.17,498.00 386.50,498.00L399.50,498.00C403.83,498.00 408.17,484.70 412.50,484.70L424.50,484.70C428.83,484.70 433.17,490.50 437.50,490.50L450.50,490.50C454.83,490.50 459.17,492.90 463.50,492.90L476.50,492.90C480.50,492.90 484.50,491.10 488.50,491.10L501.50,491.10C505.83,491.10 510.17,490.00 514.50,490.00L527.50,490.00C531.83,490.00 536.17,486.50 540.50,486.50L552.50,486.50L565.50,486.50L578.50,486.50C582.83,486.50 587.17,482.00 591.50,482.00L604.50,482.00C608.50,482.00 612.50,479.30 616.50,479.30L629.50,479.30C633.83,479.30 638.17,484.40 642.50,484.40L655.50,484.40C659.50,484.40 663.50,477.50 667.50,477.50L680.50,477.50C684.83,477.50 689.17,469.50 693.50,469.50L706.50,469.50C710.83,469.50 715.17,483.60 719.50,483.60L731.50,483.60C735.83,483.60 740.17,488.50 744.50,488.50L757.50,488.50C761.83,488.50 766.17,486.50 770.50,486.50L783.50,486.50C787.50,486.50 791.50,496.40 795.50,496.40L808.50,496.40C812.83,496.40 817.17,489.20 821.50,489.20L834.50,489.20L847.50,489.20L859.50,489.20C863.83,489.20 868.17,486.50 872.50,486.50L885.50,486.50C889.83,486.50 894.17,492.90 898.50,492.90L910.50,492.90C914.83,492.90 919.17,487.60 923.50,487.60L936.50,487.60C940.83,487.60 945.17,485.50 949.50,485.50L962.50,485.50C966.50,485.50 970.50,492.90 974.50,492.90L987.50,492.90C991.83,492.90 996.17,488.40 1000.50,488.40L1013.50,488.40C1017.83,488.40 1022.17,491.90 1026.50,491.90L1038.50,491.90C1042.83,491.90 1047.17,491.30 1051.50,491.30L1064.50,491.30C1068.83,491.30 1073.17,490.00 1077.50,490.00L1090.50,490.00C1094.50,490.00 1098.50,485.50 1102.50,485.50L1115.50,485.50C1119.83,485.50 1124.17,492.90 1128.50,492.90L1141.50,492.90C1145.83,492.90 1150.17,494.50 1154.50,494.50L1166.50,494.50C1170.83,494.50 1175.17,484.40 1179.50,484.40L1192.50,484.40C1196.83,484.40 1201.17,488.40 1205.50,488.40L1217.50,488.40C1221.83,488.40 1226.17,494.50 1230.50,494.50L1243.50,494.50C1247.83,494.50 1252.17,486.50 1256.50,486.50L1269.50,486.50C1273.50,486.50 1277.50,488.40 1281.50,488.40L1294.50,488.40C1298.83,488.40 1303.17,491.30 1307.50,491.30L1320.50,491.30L1333.50,491.30L1345.50,491.30C1349.83,491.30 1354.17,488.40 1358.50,488.40L1371.50,488.40C1375.83,488.40 1380.17,492.40 1384.50,492.40L1397.50,492.40C1401.50,492.40 1405.50,495.60 1409.50,495.60L1422.50,495.60C1426.83,495.60 1431.17,486.50 1435.50,486.50L1448.50,486.50C1452.50,486.50 1456.50,490.00 1460.50,490.00L1473.50,490.00C1477.83,490.00 1482.17,495.25 1486.50,495.25L1499.50,495.25C1503.83,495.25 1508.17,483.50 1512.50,483.50L1524.50,483.50C1528.83,483.50 1533.17,487.25 1537.50,487.25L1550.50,487.25C1554.83,487.25 1559.17,493.50 1563.50,493.50L1576.50,493.50C1580.50,493.50 1584.50,492.83 1588.50,492.50"/><path fill="rgba(126,178,109,0.4)" d="M54.50,50.50L1588.50,50.50L1588.50,492.50C1584.50,492.83 1580.50,493.50 1576.50,493.50L1563.50,493.50C1559.17,493.50 1554.83,487.25 1550.50,487.25L1537.50,487.25C1533.17,487.25 1528.83,483.50 1524.50,483.50L1512.50,483.50C1508.17,483.50 1503.83,495.25 1499.50,495.25L1486.50,495.25C1482.17,495.25 1477.83,490.00 1473.50,490.00L1460.50,490.00C1456.50,490.00 1452.50,486.50 1448.50,486.50L1435.50,486.50C1431.17,486.50 1426.83,495.60 1422.50,495.60L1409.50,495.60C1405.50,495.60 1401.50,492.40 1397.50,492.40L1384.50,492.40C1380.17,492.40 1375.83,488.40 1371.50,488.40L1358.50,488.40C1354.17,488.40 1349.83,491.30 1345.50,491.30L1333.50,491.30L1320.50,491.30L1307.50,491.30C1303.17,491.30 1298.83,488.40 1294.50,488.40L1281.50,488.40C1277.50,488.40 1273.50,486.50 1269.50,486.50L1256.50,486.50C1252.17,486.50 1247.83,494.50 1243.50,494.50L1230.50,494.50C1226.17,494.50 1221.83,488.40 1217.50,488.40L1205.50,488.40C1201.17,488.40 1196.83,484.40 1192.50,484.40L1179.50,484.40C1175.17,484.40 1170.83,494.50 1166.50,494.50L1154.50,494.50C1150.17,494.50 1145.83,492.90 1141.50,492.90L1128.50,492.90C1124.17,492.90 1119.83,485.50 1115.50,485.50L1102.50,485.50C1098.50,485.50 1094.50,490.00 1090.50,490.00L1077.50,490.00C1073.17,490.00 1068.83,491.30 1064.50,491.30L1051.50,491.30C1047.17,491.30 1042.83,491.90 1038.50,491.90L1026.50,491.90C1022.17,491.90 1017.83,488.40 1013.50,488.40L1000.50,488.40C996.17,488.40 991.83,492.90 987.50,492.90L974.50,492.90C970.50,492.90 966.50,485.50 962.50,485.50L949.50,485.50C945.17,485.50 940.83,487.60 936.50,487.60L923.50,487.60C919.17,487.60 914.83,492.90 910.50,492.90L898.50,492.90C894.17,492.90 889.83,486.50 885.50,486.50L872.50,486.50C868.17,486.50 863.83,489.20 859.50,489.20L847.50,489.20L834.50,489.20L821.50,489.20C817.17,489.20 812.83,496.40 808.50,496.40L795.50,496.40C791.50,496.40 787.50,486.50 783.50,486.50L770.50,486.50C766.17,486.50 761.83,488.50 757.50,488.50L744.50,488.50C740.17,488.50 735.83,483.60 731.50,483.60L719.50,483.60C715.17,483.60 710.83,469.50 706.50,469.50L693.50,469.50C689.17,469.50 684.83,477.50 680.50,477.50L667.50,477.50C663.50,477.50 659.50,484.40 655.50,484.40L642.50,484.40C638.17,484.40 633.83,479.30 629.50,479.30L616.50,479.30C612.50,479.30 608.50,482.00 604.50,482.00L591.50,482.00C587.17,482.00 582.83,486.50 578.50,486.50L565.50,486.50L552.50,486.50L540.50,486.50C536.17,486.50 531.83,490.00 527.50,490.00L514.50,490.00C510.17,490.00 505.83,491.10 501.50,491.10L488.50,491.10C484.50,491.10 480.50,492.90 476.50,492.90L463.50,492.90C459.17,492.90 454.83,490.50 450.50,490.50L437.50,490.50C433.17,490.50 428.83,484.70 424.50,484.70L412.50,484.70C408.17,484.70 403.83,498.00 399.50,498.00L386.50,498.00C382.17,498.00 377.83,488.40 373.50,488.40L361.50,488.40L348.50,488.40L335.50,488.40C331.17,488.40 326.83,491.60 322.50,491.60L309.50,491.60C305.50,491.60 301.50,494.00 297.50,494.00L284.50,494.00C280.17,494.00 275.83,443.60 271.50,443.60L258.50,443.60C254.17,443.60 249.83,489.20 245.50,489.20L233.50,489.20C229.17,489.20 224.83,698.50 220.50,698.50L207.50,698.50L194.50,698.50L181.50,698.50L169.50,698.50L156.50,698.50L143.50,698.50L130.50,698.50L118.50,698.50L105.50,698.50L92.50,698.50L79.50,698.50L66.50,698.50L54.50,698.50Z"/></g>
<g class="lines"></g>
<rect x="64" y="49" width="1524" height="1" fill="#0f0b1a"/><rect x="64" y="699" width="1524" height="1" fill="#001a3f" fill-opacity="0.35"/>
<g class="cross"><line x1="651.5" x2="651.5" y1="50" y2="698.5" stroke="#607D8B" stroke-dasharray="3,1.5"/>
<line x1="64" x2="1599" y1="501" y2="501" stroke="#607D8B" stroke-dasharray="3,1.5"/></g>
<g class="pts"><circle cx="654.7" cy="616.3" r="3.5" fill="none" stroke="#EAB839" stroke-opacity="0.5" stroke-width="2"/><circle cx="654.7" cy="616.3" r="2.5" fill="#EAB839"/><circle cx="654.7" cy="491.0" r="3.5" fill="none" stroke="#0A437C" stroke-opacity="0.5" stroke-width="2"/><circle cx="654.7" cy="491.0" r="2.5" fill="#0A437C"/><circle cx="654.7" cy="491.0" r="3.5" fill="none" stroke="#890F02" stroke-opacity="0.5" stroke-width="2"/><circle cx="654.7" cy="491.0" r="2.5" fill="#890F02"/><circle cx="654.7" cy="484.6" r="3.5" fill="none" stroke="#FF780A" stroke-opacity="0.5" stroke-width="2"/><circle cx="654.7" cy="484.6" r="2.5" fill="#FF780A"/><circle cx="654.7" cy="484.6" r="3.5" fill="none" stroke="#6D1F62" stroke-opacity="0.5" stroke-width="2"/><circle cx="654.7" cy="484.6" r="2.5" fill="#6D1F62"/><circle cx="654.7" cy="50.5" r="3.5" fill="none" stroke="#7EB26D" stroke-opacity="0.5" stroke-width="2"/><circle cx="654.7" cy="50.5" r="2.5" fill="#7EB26D"/></g>
<path d="M13.2,10.6h2.6v2.2h-2.6z M12.2,14h3.6v4.3h1.1v1.2h-4.7v-1.2h1.1v-3.1h-1.1z" fill="#c8c9d4"/>
<polyline points="845,20.5 848,23.5 851,20.5" fill="none" stroke="#9a9ba3" stroke-width="1.3"/>
<g class="yl"><text x="56" y="701.5">0.00%</text><text x="56" y="669.1">5.00%</text><text x="56" y="636.7">10.00%</text><text x="56" y="604.3">15.00%</text><text x="56" y="571.9">20.00%</text><text x="56" y="539.5">25.00%</text><text x="56" y="507.1">30.00%</text><text x="56" y="474.7">35.00%</text><text x="56" y="442.3">40.00%</text><text x="56" y="409.9">45.00%</text><text x="56" y="377.5">50.00%</text><text x="56" y="345.1">55.00%</text><text x="56" y="312.7">60.00%</text><text x="56" y="280.3">65.00%</text><text x="56" y="247.9">70.00%</text><text x="56" y="215.5">75.00%</text><text x="56" y="183.1">80.00%</text><text x="56" y="150.7">85.00%</text><text x="56" y="118.3">90.00%</text><text x="56" y="85.9">95.00%</text><text x="56" y="53.5">100.00%</text></g>
<g class="xl"><text x="245.4" y="714.6">11:10</text><text x="501.2" y="714.6">11:15</text><text x="757.0" y="714.6">11:20</text><text x="1012.9" y="714.6">11:25</text><text x="1268.7" y="714.6">11:30</text><text x="1524.5" y="714.6">11:35</text></g>
</svg>
<div class="legend"><span class="li"><i style="background:#EAB839"></i>Busy System</span><span class="li"><i style="background:#0A437C"></i>Busy User</span><span class="li"><i style="background:#890F02"></i>Busy Iowait</span><span class="li"><i style="background:#FF780A"></i>Busy IRQs</span><span class="li"><i style="background:#6D1F62"></i>Busy Other</span><span class="li"><i style="background:#7EB26D"></i>Idle</span></div>
<div class="tip"><div class="th">2024-06-05 11:18:00</div><div class="tr"><i style="background:#7EB26D"></i><span class="tl">Idle</span><span class="tv">67.0%</span></div><div class="tr"><i style="background:#0A437C"></i><span class="tl">Busy User</span><span class="tv">19.3%</span></div><div class="tr"><i style="background:#EAB839"></i><span class="tl">Busy System</span><span class="tv">12.8%</span></div><div class="tr"><i style="background:#FF780A"></i><span class="tl">Busy IRQs</span><span class="tv">0.893%</span></div><div class="tr b"><i style="background:#890F02"></i><span class="tl">Busy Iowait</span><span class="tv">0.00834%</span></div><div class="tr"><i style="background:#6D1F62"></i><span class="tl">Busy Other</span><span class="tv">0%</span></div></div>
</body></html>
